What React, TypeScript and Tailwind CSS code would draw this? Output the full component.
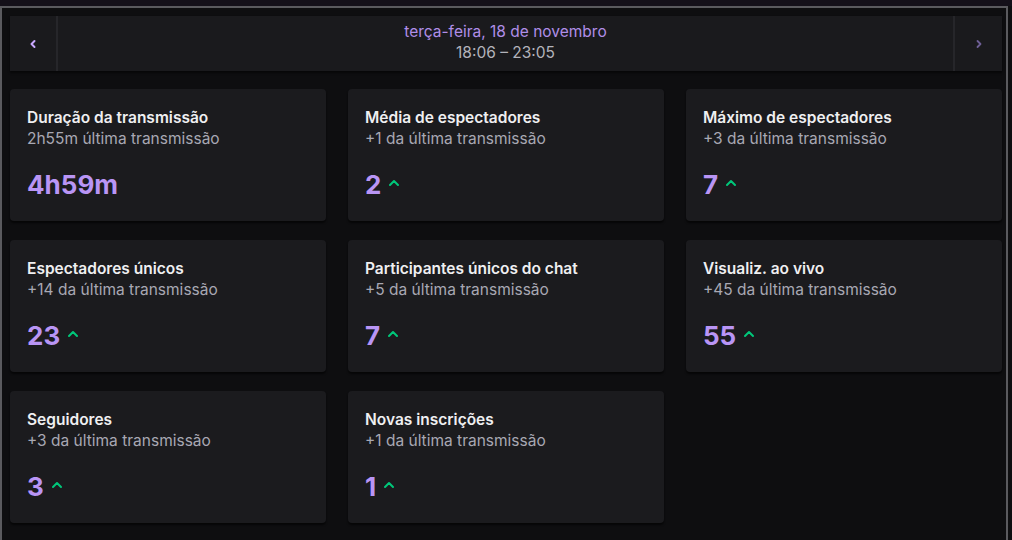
import React from "react";

const cards = [
  { title: "Duração da transmissão", sub: "2h55m última transmissão", value: "4h59m", up: false },
  { title: "Média de espectadores", sub: "+1 da última transmissão", value: "2", up: true },
  { title: "Máximo de espectadores", sub: "+3 da última transmissão", value: "7", up: true },
  { title: "Espectadores únicos", sub: "+14 da última transmissão", value: "23", up: true },
  { title: "Participantes únicos do chat", sub: "+5 da última transmissão", value: "7", up: true },
  { title: "Visualiz. ao vivo", sub: "+45 da última transmissão", value: "55", up: true },
  { title: "Seguidores", sub: "+3 da última transmissão", value: "3", up: true },
  { title: "Novas inscrições", sub: "+1 da última transmissão", value: "1", up: true },
];

function Caret() {
  return (
    <svg width="12" height="8" viewBox="0 0 12 8" className="ml-[7px] mt-[-4px]">
      <path d="M2 6 L6 2 L10 6" fill="none" stroke="#00c77a" strokeWidth="2" strokeLinecap="round" strokeLinejoin="round" />
    </svg>
  );
}

function Card({ title, sub, value, up }: { title: string; sub: string; value: string; up: boolean }) {
  return (
    <div className="h-[132px] rounded-[4px] bg-[#1b1b1e] shadow-[0_2px_2px_rgba(0,0,0,0.6)] pl-[17px] pt-[18px]">
      <div className="text-[15.5px] leading-[22px] font-semibold text-[#efeff1]">{title}</div>
      <div className="text-[15.5px] leading-[20px] text-[#a8a8b3]">{sub}</div>
      <div className="mt-[20px] flex items-center">
        <span className="text-[26px] leading-[32px] font-bold text-[#b995f5]">{value}</span>
        {up && <Caret />}
      </div>
    </div>
  );
}

export default function App() {
  return (
    <div className="w-[1012px] h-[540px] bg-[#0e0e10] overflow-hidden" style={{ fontFamily: "Inter, 'Noto Sans', sans-serif" }}>
      <div className="h-[6px] bg-[#141019]" />
      <div className="w-[1008px] h-[534px] border-t-2 border-l-2 border-r-2 border-[#5a5a5e] bg-[#0e0e10] pl-[8px] pr-[4px] pt-[8px]">
        <div className="h-[55px] flex bg-[#1a1a1d] shadow-[0_2px_2px_rgba(0,0,0,0.5)]">
          <div className="w-[48px] flex items-center justify-center border-r-2 border-[#26262a]">
            <svg width="10" height="10" viewBox="0 0 10 10">
              <path d="M6.5 2 L3.5 5 L6.5 8" fill="none" stroke="#c9a8ff" strokeWidth="2" strokeLinecap="round" strokeLinejoin="round" />
            </svg>
          </div>
          <div className="flex-1 flex flex-col items-center pt-[5px]">
            <div className="text-[15.5px] leading-[21px] text-[#b08ee8]">terça-feira, 18 de novembro</div>
            <div className="text-[15.5px] leading-[21px] text-[#b3b3bb]">18:06 – 23:05</div>
          </div>
          <div className="w-[49px] flex items-center justify-center border-l-2 border-[#26262a]">
            <svg width="10" height="10" viewBox="0 0 10 10">
              <path d="M3.5 2 L6.5 5 L3.5 8" fill="none" stroke="#6e5f96" strokeWidth="1.8" strokeLinecap="round" strokeLinejoin="round" />
            </svg>
          </div>
        </div>
        <div className="mt-[18px] grid grid-cols-3 gap-x-[22px] gap-y-[19px]">
          {cards.map((c) => (
            <Card key={c.title} {...c} />
          ))}
        </div>
      </div>
    </div>
  );
}
